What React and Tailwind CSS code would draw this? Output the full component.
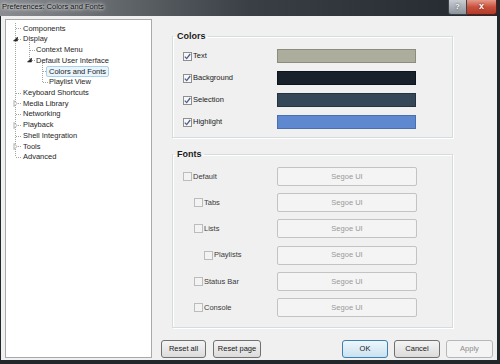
import React from 'react';

const font = { fontFamily: '"Liberation Sans", Arial, sans-serif' };

// tree rows: level, label, expander ('open' | 'closed' | null)
const treeRows = [
  { level: 0, label: 'Components' },
  { level: 0, label: 'Display', exp: 'open' },
  { level: 1, label: 'Context Menu' },
  { level: 1, label: 'Default User Interface', exp: 'open' },
  { level: 2, label: 'Colors and Fonts', selected: true },
  { level: 2, label: 'Playlist View' },
  { level: 0, label: 'Keyboard Shortcuts' },
  { level: 0, label: 'Media Library', exp: 'closed' },
  { level: 0, label: 'Networking' },
  { level: 0, label: 'Playback', exp: 'closed' },
  { level: 0, label: 'Shell Integration' },
  { level: 0, label: 'Tools', exp: 'closed' },
  { level: 0, label: 'Advanced' },
];

const ROW = 10.72;
const cy = (i) => 8.3 + ROW * i;
const levelX = [9, 23, 36];

const TreeLines = () => (
  <svg className="absolute left-0 top-0 pointer-events-none" width="146" height="150">
    <g stroke="#a3a3a3" strokeWidth="1" strokeDasharray="1 1" shapeRendering="crispEdges">
      <line x1="9.5" y1="3" x2="9.5" y2={cy(12)} />
      <line x1="23.5" y1={cy(1) + 3} x2="23.5" y2={cy(3)} />
      <line x1="36.5" y1={cy(3) + 3} x2="36.5" y2={cy(5)} />
      {treeRows.map((r, i) => {
        const x = levelX[r.level];
        return (
          <line key={i} x1={x + 0.5} y1={Math.round(cy(i)) + 0.5} x2={x + 6} y2={Math.round(cy(i)) + 0.5} />
        );
      })}
    </g>
    {treeRows.map((r, i) => {
      if (!r.exp) return null;
      const x = levelX[r.level] + 0.5;
      const y = Math.round(cy(i)) + 0.5;
      if (r.exp === 'open') {
        return <polygon key={i} points={`${x + 2},${y - 2.5} ${x + 2},${y + 1.5} ${x - 2},${y + 1.5}`} fill="#262626" stroke="#262626" strokeWidth="0.6" />;
      }
      return <polygon key={i} points={`${x - 1.5},${y - 3} ${x + 1.5},${y} ${x - 1.5},${y + 3}`} fill="#ffffff" stroke="#9a9a9a" strokeWidth="0.8" />;
    })}
  </svg>
);

const Checkbox = ({ checked, disabled }) => (
  <span
    className={
      'inline-flex items-center justify-center w-[9px] h-[9px] border shrink-0 ' +
      (disabled ? 'border-[#bcbcbc] bg-[#f3f3f3]' : 'border-[#8e8f8f] bg-[#f7f7f7]')
    }
  >
    {checked && (
      <svg width="7" height="7" viewBox="0 0 7 7">
        <path d="M0.8 3.6 L2.7 5.6 L6.2 1" fill="none" stroke="#4a5f97" strokeWidth="1.3" />
      </svg>
    )}
  </span>
);

const colorRows = [
  { label: 'Text', bg: 'bg-[#adad9e]', border: 'border-[#8c8c7f]' },
  { label: 'Background', bg: 'bg-[#19212a]', border: 'border-[#0f141a]' },
  { label: 'Selection', bg: 'bg-[#344859]', border: 'border-[#26343f]' },
  { label: 'Highlight', bg: 'bg-[#5e88d0]', border: 'border-[#4a6fae]' },
];

const fontRows = [
  { label: 'Default', indent: 'pl-0' },
  { label: 'Tabs', indent: 'pl-[11px]' },
  { label: 'Lists', indent: 'pl-[11px]' },
  { label: 'Playlists', indent: 'pl-[21px]' },
  { label: 'Status Bar', indent: 'pl-[11px]' },
  { label: 'Console', indent: 'pl-[11px]' },
];

const Btn = ({ children, w, kind }) => {
  let cls = 'border-[#707070] bg-gradient-to-b from-[#f4f4f4] to-[#dcdcdc] text-[#1a1a1a]';
  if (kind === 'default') cls = 'border-[#3c7fb1] bg-gradient-to-b from-[#eef6fb] to-[#c9e2f1] text-[#1a1a1a]';
  if (kind === 'disabled') cls = 'border-[#b5b8ba] bg-[#f4f4f4] text-[#8c8c8c]';
  return (
    <div className={'h-[18px] rounded-[3px] border flex items-center justify-center text-[7.5px] ' + w + ' ' + cls}>
      {children}
    </div>
  );
};

export default function App() {
  return (
    <div className="w-[500px] h-[364px] bg-[#22272c] flex flex-col overflow-hidden" style={font}>
      {/* title bar */}
      <div className="h-[16px] flex items-stretch bg-gradient-to-r from-[#8a8e92] via-[#3a3f45] to-[#23282e] relative">
        <div className="pl-[2px] pt-[2px] text-[7.5px] leading-[9px] text-[#111] [text-shadow:0_0_3px_#ffffff,0_0_5px_#ffffff]">
          Preferences: Colors and Fonts
        </div>
        <div className="ml-auto mr-[3px] flex items-stretch">
          <div className="w-[19px] h-[15px] rounded-bl-[3px] border border-t-0 border-[#3d4248] bg-gradient-to-b from-[#c9ced3] to-[#8c949b] flex items-center justify-center text-[8px] font-bold text-white [text-shadow:0_0_2px_#333]">
            ?
          </div>
          <div className="w-[30px] h-[15px] rounded-br-[3px] border border-t-0 border-l-0 border-[#5a1e16] bg-gradient-to-b from-[#e59a8a] via-[#c8503c] to-[#b33a26] flex items-center justify-center text-[9px] font-bold text-white [text-shadow:0_0_2px_#5a1e16]">
            x
          </div>
        </div>
      </div>

      {/* body */}
      <div className="flex-1 ml-[1px] mr-[3px] mb-[4px] bg-[#f0f0f0] flex">
        {/* tree */}
        <div className="w-[147px] ml-[4px] mt-[3px] mb-[2px] bg-white border border-[#a9a9a9] relative">
          <TreeLines />
          <div className="pt-[3px] relative">
            {treeRows.map((r, i) => (
              <div
                key={i}
                className={
                  'h-[10.72px] flex items-center text-[7.5px] text-[#1e1e1e] whitespace-nowrap ' +
                  (r.level === 0 ? 'pl-[17px]' : r.level === 1 ? 'pl-[30px]' : 'pl-[40px]')
                }
              >
                {r.selected ? (
                  <span className="border border-[#a8d1ec] bg-[#e9f4fc] rounded-[2px] px-[2px] leading-[9px]">{r.label}</span>
                ) : (
                  <span className={r.level === 2 ? 'pl-[3px]' : ''}>{r.label}</span>
                )}
              </div>
            ))}
          </div>
        </div>

        {/* right side */}
        <div className="flex-1 flex flex-col pt-[15px]">
          <fieldset className="ml-[20px] w-[281px] border border-[#d5dcdf] shadow-[inset_1px_1px_0_#ffffff,1px_1px_0_#ffffff] pb-[4px]">
            <legend className="pl-[4px] pr-[2px] text-[9px] leading-[10px] font-bold text-[#1a1a1a]">Colors</legend>
            <div className="pt-[4px] flex flex-col">
              {colorRows.map((c) => (
                <div key={c.label} className="h-[22px] flex items-center">
                  <div className="w-[104px] pl-[10px] flex items-center gap-[1px] text-[7.5px] text-[#1a1a1a]">
                    <Checkbox checked />
                    <span>{c.label}</span>
                  </div>
                  <div className={'w-[139px] h-[14px] border ' + c.bg + ' ' + c.border} />
                </div>
              ))}
            </div>
          </fieldset>

          <fieldset className="ml-[20px] mt-[11px] w-[281px] border border-[#d5dcdf] shadow-[inset_1px_1px_0_#ffffff,1px_1px_0_#ffffff] pb-[6px]">
            <legend className="pl-[4px] pr-[2px] text-[9px] leading-[10px] font-bold text-[#1a1a1a]">Fonts</legend>
            <div className="pt-[4px] flex flex-col">
              {fontRows.map((f) => (
                <div key={f.label} className="h-[26.3px] flex items-center">
                  <div className="w-[104px] pl-[10px] flex items-center">
                    <div className={'flex items-center gap-[1px] text-[7.5px] text-[#3a3a3a] ' + f.indent}>
                      <Checkbox disabled />
                      <span>{f.label}</span>
                    </div>
                  </div>
                  <div className="w-[140px] h-[19px] border border-[#c3c3c3] rounded-[2px] bg-[#f4f4f4] flex items-center justify-center text-[7.5px] text-[#9a9a9a]">
                    Segoe UI
                  </div>
                </div>
              ))}
            </div>
          </fieldset>

          <div className="mt-[12px] flex items-center pl-[9px] pr-[4px]">
            <Btn w="w-[45px]">Reset all</Btn>
            <div className="ml-[7px]">
              <Btn w="w-[48px]">Reset page</Btn>
            </div>
            <div className="ml-auto flex gap-[6px]">
              <Btn w="w-[46px]" kind="default">OK</Btn>
              <Btn w="w-[46px]">Cancel</Btn>
              <Btn w="w-[47px]" kind="disabled">Apply</Btn>
            </div>
          </div>
        </div>
      </div>
    </div>
  );
}
